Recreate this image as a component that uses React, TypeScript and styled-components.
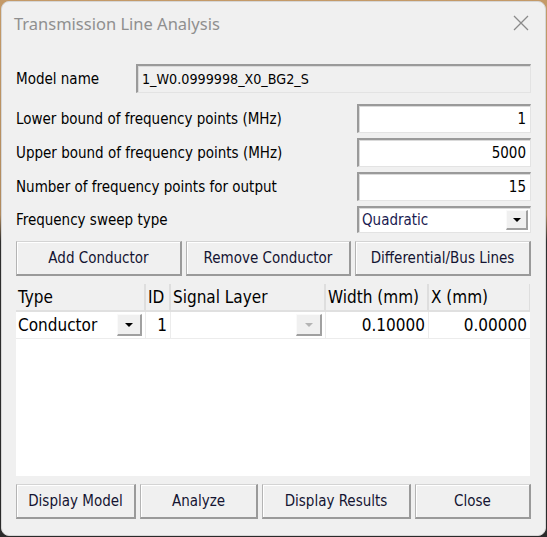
import styled, { createGlobalStyle } from 'styled-components';

const GlobalStyle = createGlobalStyle`
    html, body {
        margin: 0;
        padding: 0;
        width: 547px;
        height: 537px;
        overflow: hidden;
        background: linear-gradient(180deg, #c49a68 0%, #b08a5e 40%, #2e2e2e 45%, #2a2a2a 100%);
    }
    * {
        box-sizing: border-box;
    }
`;

const UI_FONT = `'DejaVu Sans Condensed', 'DejaVu Sans', sans-serif`;

const Window = styled.div`
    margin: 1px 0 0 1px;
    width: 545px;
    height: 535px;
    background: #f0f0f0;
    border: 1px solid #d6d6d6;
    border-radius: 8px;
    display: flex;
    flex-direction: column;
    font-family: ${UI_FONT};
    color: #000;
    overflow: hidden;
`;

const TitleBar = styled.div`
    height: 45px;
    display: flex;
    align-items: center;
    justify-content: space-between;
    padding: 0 16px 3px 12px;
`;

const Title = styled.span`
    font-family: 'Noto Sans', 'Open Sans', sans-serif;
    font-size: 16.5px;
    color: #8f8f8f;
`;

const CloseIcon = () => (
    <svg width="16" height="16" viewBox="0 0 16 16">
        <path d="M1 1 L15 15 M15 1 L1 15" stroke="#8a8a8a" strokeWidth="1.3" />
    </svg>
);

const Content = styled.div`
    flex: 1;
    display: flex;
    flex-direction: column;
    padding: 17px 14px 16px 14px;
`;

const ModelRow = styled.div`
    display: grid;
    grid-template-columns: 120px 1fr;
    align-items: center;
    height: 29px;
    margin-bottom: 11px;
`;

const Fields = styled.div`
    display: flex;
    flex-direction: column;
    gap: 5px;
`;

const FieldRow = styled.div<{ $h?: number }>`
    display: grid;
    grid-template-columns: 1fr 174px;
    align-items: center;
    height: ${(p) => p.$h ?? 29}px;
`;

const Label = styled.span`
    font-size: 15px;
    white-space: nowrap;
`;

const Sunken = styled.div<{ $readonly?: boolean; $align?: string }>`
    height: 100%;
    display: flex;
    align-items: center;
    justify-content: ${(p) => (p.$align === 'right' ? 'flex-end' : 'flex-start')};
    padding: 0 4px 0 ${(p) => (p.$readonly ? 4 : 5)}px;
    font-size: ${(p) => (p.$readonly ? 14.2 : 15)}px;
    background: ${(p) => (p.$readonly ? '#f0f0f0' : '#fff')};
    border-top: 2px solid #9a9a9a;
    border-left: 2px solid #9a9a9a;
    border-bottom: 1px solid #e3e3e3;
    border-right: 1px solid #e3e3e3;
    box-shadow: inset 1px 1px 0 #dadada;
`;

const Combo = styled(Sunken)`
    padding: 0 2px 0 3px;
    justify-content: space-between;
    color: #1a1a50;
`;

const DropButton = styled.div<{ $w?: number; $h?: number }>`
    width: ${(p) => p.$w ?? 21}px;
    height: ${(p) => p.$h ?? 21}px;
    background: #f0f0f0;
    border-top: 1px solid #fafafa;
    border-left: 1px solid #fafafa;
    border-right: 2px solid #a0a0a0;
    border-bottom: 2px solid #a0a0a0;
    display: flex;
    align-items: center;
    justify-content: center;
`;

const Arrow = styled.span<{ $disabled?: boolean }>`
    width: 0;
    height: 0;
    border-left: 4px solid transparent;
    border-right: 4px solid transparent;
    border-top: 4px solid ${(p) => (p.$disabled ? '#b4b4b4' : '#000')};
`;

const ButtonRow = styled.div<{ $cols: string }>`
    display: grid;
    grid-template-columns: ${(p) => p.$cols};
    gap: 4px;
    height: 35px;
`;

const Button = styled.div`
    display: flex;
    align-items: center;
    justify-content: center;
    font-size: 15px;
    color: #141432;
    background: #f0f0f0;
    border-top: 1px solid #d4d4d4;
    border-left: 1px solid #b4b4b4;
    border-right: 2px solid #9a9a9a;
    border-bottom: 2px solid #9a9a9a;
    box-shadow: inset 1px 1px 0 #fff;
    white-space: nowrap;
`;

const Table = styled.div`
    flex: 1;
    margin: 8px 1px 8px 0;
    background: #fff;
    display: flex;
    flex-direction: column;
`;

const COLS = '130px 25px 155px 103px 1fr';

const HeaderRow = styled.div`
    display: grid;
    grid-template-columns: ${COLS};
    height: 28px;
`;

const HeaderCell = styled.div`
    background: #f0f0f0;
    border-right: 2px solid #dedede;
    border-bottom: 2px solid #e0e0e0;
    font-size: 17px;
    display: flex;
    align-items: center;
    padding: 0 2px;
    white-space: nowrap;
    &:last-child {
        border-right: 1px solid #dedede;
    }
`;

const DataRow = styled.div`
    display: grid;
    grid-template-columns: ${COLS};
    height: 27px;
    border-bottom: 1px solid #ececec;
`;

const Cell = styled.div<{ $align?: string }>`
    font-size: 17px;
    display: flex;
    align-items: center;
    justify-content: ${(p) =>
        p.$align === 'right' ? 'flex-end' : p.$align === 'between' ? 'space-between' : 'flex-start'};
    padding: 0 3px 0 2px;
    border-right: 1px solid #ececec;
    white-space: nowrap;
    &:last-child {
        border-right: none;
    }
`;

export default function App() {
    const fields = [
        { label: 'Lower bound of frequency points (MHz)', value: '1' },
        { label: 'Upper bound of frequency points (MHz)', value: '5000' },
        { label: 'Number of frequency points for output', value: '15' },
    ];
    return (
        <>
            <GlobalStyle />
            <Window>
                <TitleBar>
                    <Title>Transmission Line Analysis</Title>
                    <CloseIcon />
                </TitleBar>
                <Content>
                    <ModelRow>
                        <Label>Model name</Label>
                        <Sunken $readonly>1_W0.0999998_X0_BG2_S</Sunken>
                    </ModelRow>
                    <Fields>
                        {fields.map((f) => (
                            <FieldRow key={f.label}>
                                <Label>{f.label}</Label>
                                <Sunken $align="right">{f.value}</Sunken>
                            </FieldRow>
                        ))}
                        <FieldRow $h={27}>
                            <Label>Frequency sweep type</Label>
                            <Combo>
                                Quadratic
                                <DropButton $w={22} $h={20}>
                                    <Arrow />
                                </DropButton>
                            </Combo>
                        </FieldRow>
                    </Fields>
                    <ButtonRow $cols="166px 165px 1fr" style={{ marginTop: 8 }}>
                        <Button>Add Conductor</Button>
                        <Button>Remove Conductor</Button>
                        <Button>Differential/Bus Lines</Button>
                    </ButtonRow>
                    <Table>
                        <HeaderRow>
                            <HeaderCell>Type</HeaderCell>
                            <HeaderCell>ID</HeaderCell>
                            <HeaderCell>Signal Layer</HeaderCell>
                            <HeaderCell>Width (mm)</HeaderCell>
                            <HeaderCell>X (mm)</HeaderCell>
                        </HeaderRow>
                        <DataRow>
                            <Cell $align="between">
                                Conductor
                                <DropButton $w={25} $h={22}>
                                    <Arrow />
                                </DropButton>
                            </Cell>
                            <Cell $align="right">1</Cell>
                            <Cell $align="right">
                                <DropButton $w={26} $h={22}>
                                    <Arrow $disabled />
                                </DropButton>
                            </Cell>
                            <Cell $align="right">0.10000</Cell>
                            <Cell $align="right">0.00000</Cell>
                        </DataRow>
                    </Table>
                    <ButtonRow $cols="120px 118px 149px 1fr">
                        <Button>Display Model</Button>
                        <Button>Analyze</Button>
                        <Button>Display Results</Button>
                        <Button>Close</Button>
                    </ButtonRow>
                </Content>
            </Window>
        </>
    );
}
